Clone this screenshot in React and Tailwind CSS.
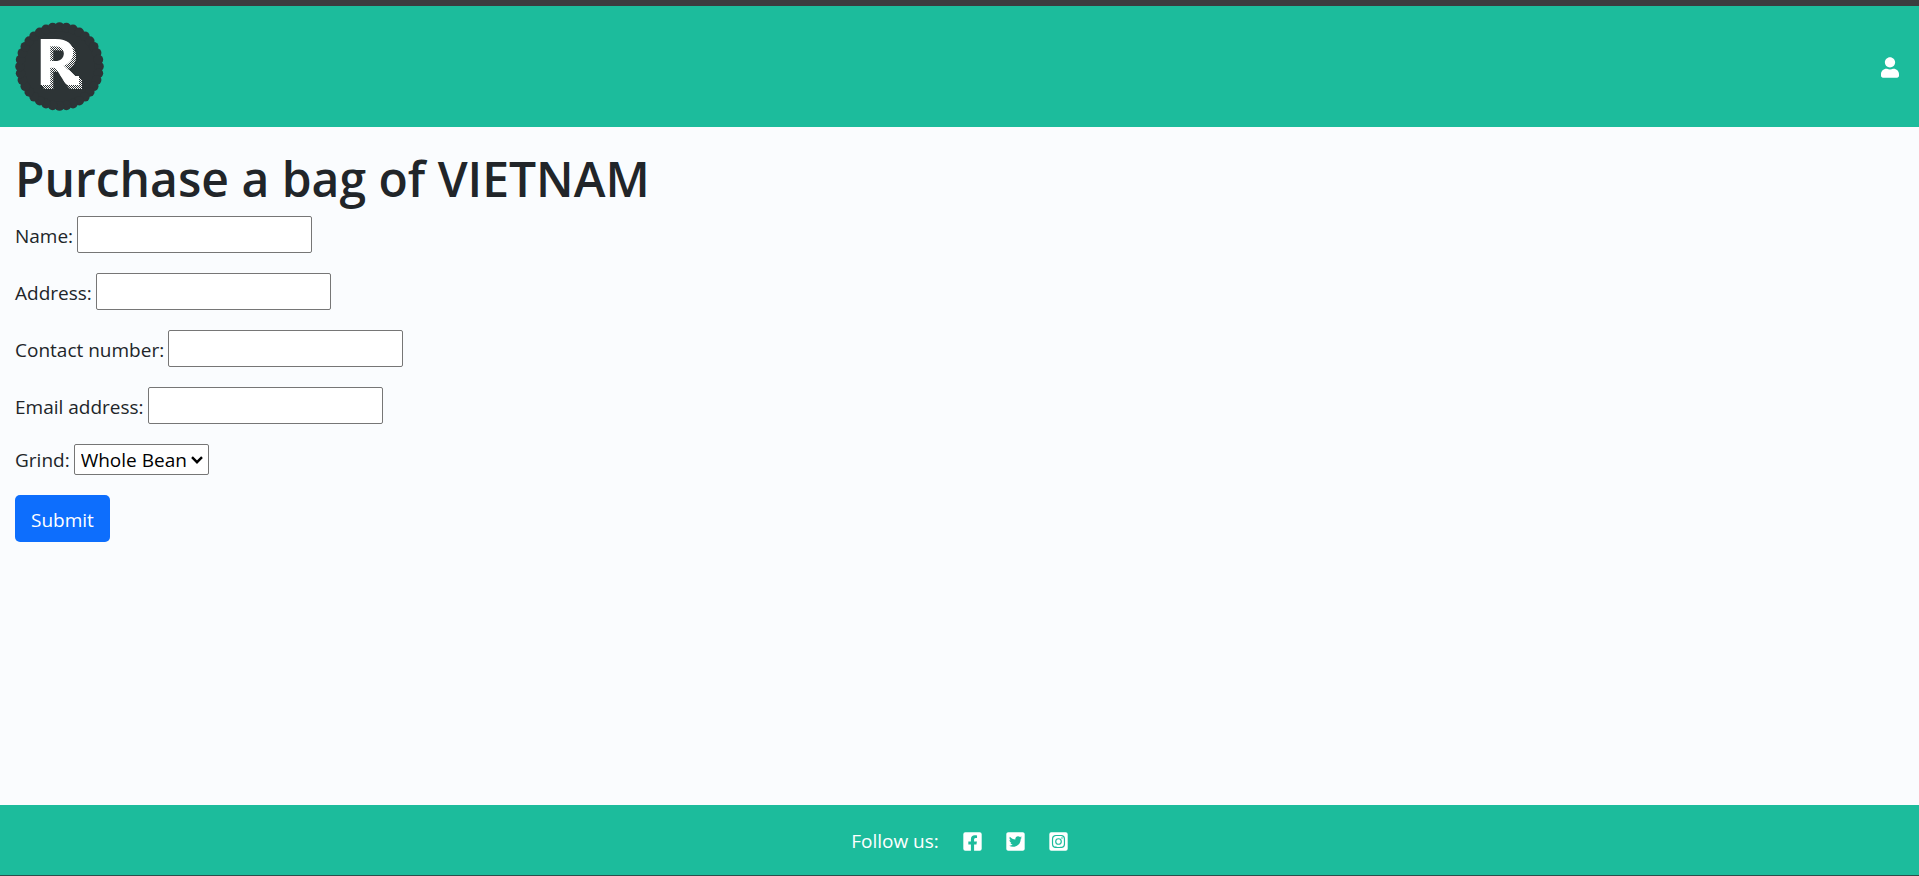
import { FaUser, FaFacebookSquare, FaTwitterSquare, FaInstagramSquare } from "react-icons/fa";

const fields = [
  { id: "name", label: "Name:", type: "text" },
  { id: "address", label: "Address:", type: "text" },
  { id: "contact", label: "Contact number:", type: "tel" },
  { id: "email", label: "Email address:", type: "email" },
];

const socials = [
  { name: "Facebook", Icon: FaFacebookSquare },
  { name: "Twitter", Icon: FaTwitterSquare },
  { name: "Instagram", Icon: FaInstagramSquare },
];

const scallops = Array.from({ length: 36 }, (_, i) => {
  const a = (i * Math.PI * 2) / 36;
  return { cx: 44.5 + 39.5 * Math.cos(a), cy: 44.5 + 39.5 * Math.sin(a) };
});

function Logo() {
  return (
    <svg viewBox="0 0 89 89" className="size-[89px]" role="img" aria-label="Home">
      <defs>
        {/* Checkered drop shadow */}
        <filter id="hatch" x="0" y="0" width="89" height="89" filterUnits="userSpaceOnUse" colorInterpolationFilters="sRGB">
          <feFlood x="0" y="0" width="1" height="1" floodColor="#fff" result="a" />
          <feTile in="a" x="0" y="0" width="2" height="2" result="a0" />
          <feFlood x="0" y="0" width="2" height="2" floodColor="#fff" floodOpacity="0" result="clear" />
          <feFlood x="1" y="1" width="1" height="1" floodColor="#fff" result="b" />
          <feFlood x="0" y="0" width="1" height="1" floodColor="#fff" result="c" />
          <feComposite in="b" in2="c" operator="xor" x="0" y="0" width="2" height="2" result="cell" />
          <feTile in="cell" x="0" y="0" width="89" height="89" result="tiles" />
          <feOffset in="SourceAlpha" dx="1" dy="1" result="s1" />
          <feOffset in="SourceAlpha" dx="2" dy="2" result="s2" />
          <feOffset in="SourceAlpha" dx="3" dy="4" result="s3" />
          <feMerge result="shadow">
            <feMergeNode in="s1" />
            <feMergeNode in="s2" />
            <feMergeNode in="s3" />
          </feMerge>
          <feComposite in="tiles" in2="shadow" operator="in" result="hatched" />
          <feMerge>
            <feMergeNode in="hatched" />
            <feMergeNode in="SourceGraphic" />
          </feMerge>
        </filter>
      </defs>
      <g fill="#2d3436">
        <circle cx="44.5" cy="44.5" r="42" />
        {scallops.map((s, i) => (
          <circle key={i} cx={s.cx} cy={s.cy} r="4.8" />
        ))}
      </g>
      <g filter="url(#hatch)" fill="#fff">
        <text x="21" y="63" fontFamily="Lato, sans-serif" fontWeight="900" fontSize="63">R</text>
        <path d="M52 46 L60 54 H64 V63 H56 Z" />
      </g>
    </svg>
  );
}

export default function App() {
  return (
    <div className="flex min-h-screen flex-col border-t-6 border-b border-t-[#3c3c3f] border-b-[#2b4f4b] bg-[#fafcfe] font-['Open_Sans','Noto_Sans',sans-serif] text-[19px] leading-[30px] text-[#212529]">
      <header className="flex items-center justify-between bg-[#1cbc9c] px-[15px] py-4">
        <a href="#home"><Logo /></a>
        <a href="#account" aria-label="Account" className="pt-[2px] pr-[5px] text-white">
          <FaUser className="h-[21px] w-[18px]" />
        </a>
      </header>

      <main className="flex-1 px-[15px] pt-[22px]">
        <h1 className="mb-[7px] text-[48px] leading-[60px] font-semibold">Purchase a bag of VIETNAM</h1>
        <form className="flex flex-col items-start gap-5" onSubmit={(e) => e.preventDefault()}>
          {fields.map((f) => (
            <div key={f.id} className="flex items-center gap-1">
              <label htmlFor={f.id} className="pt-[2px]">{f.label}</label>
              <input id={f.id} type={f.type} className="h-[37px] w-[235px] rounded-[2px] border border-[#767676] bg-white px-1" />
            </div>
          ))}
          <div className="flex items-center gap-1">
            <label htmlFor="grind">Grind:</label>
            <div className="grid items-center">
              <select id="grind" className="col-start-1 row-start-1 h-[31px] w-[135px] appearance-none rounded-[2px] border border-[#767676] bg-white pl-[6px] leading-[28px] text-black">
                <option>Whole Bean</option>
                <option>Espresso</option>
                <option>Filter</option>
              </select>
              <svg viewBox="0 0 12 8" className="pointer-events-none col-start-1 row-start-1 mr-[6px] h-2 w-3 justify-self-end" fill="none" stroke="#000" strokeWidth="2.4">
                <path d="M1 1.2 L6 6.2 L11 1.2" />
              </svg>
            </div>
          </div>
          <button type="submit" className="h-[47px] rounded-[5px] bg-[#0d6efd] px-4 pt-[2px] text-white">Submit</button>
        </form>
      </main>

      <footer className="flex h-[70px] items-center justify-center gap-6 bg-[#1cbc9c] pt-[2px] text-white">
        <span>Follow us:</span>
        {socials.map(({ name, Icon }) => (
          <a key={name} href={"#" + name.toLowerCase()} aria-label={name}>
            <Icon className="h-[21px] w-[19px]" />
          </a>
        ))}
      </footer>
    </div>
  );
}
